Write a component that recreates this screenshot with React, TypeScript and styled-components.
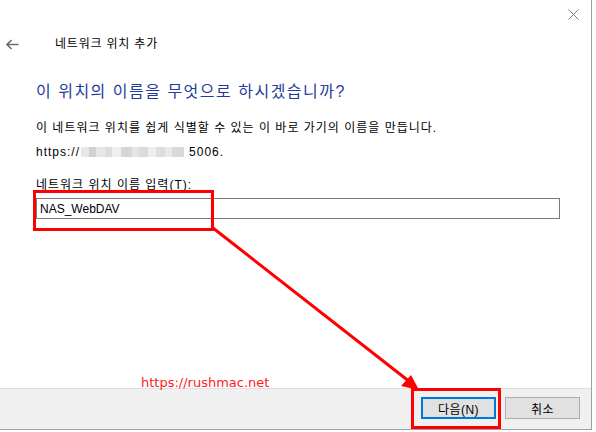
import React from "react";
import styled, { createGlobalStyle } from "styled-components";

const Global = createGlobalStyle`
  html, body { margin: 0; padding: 0; background: #ffffff; }
  body { font-family: "Liberation Sans", "Noto Sans CJK KR", sans-serif; }
`;

const Window = styled.div`
  position: relative;
  width: 591px;
  height: 429px;
  border-right: 1px solid #a0a0a0;
  border-bottom: 1px solid #a0a0a0;
  background: #ffffff;
  display: flex;
  flex-direction: column;
  font-family: "Liberation Sans", "Noto Sans CJK KR", sans-serif;
  font-size: 12px;
  color: #000;
  overflow: hidden;
`;

const TitleBar = styled.div`
  height: 30px;
  display: flex;
  justify-content: flex-end;
  align-items: center;
  padding-right: 10px;
`;

const CloseBtn = styled.div`
  width: 16px;
  height: 16px;
  display: flex;
  align-items: center;
  justify-content: center;
  margin-top: -2px;
`;

const Header = styled.div`
  height: 28px;
  display: flex;
  align-items: center;
  padding-left: 6px;
`;

const BackIcon = styled.div`
  width: 14px;
  height: 14px;
  display: flex;
  align-items: center;
  margin-right: 35px;
`;

const HeaderTitle = styled.div`
  font-size: 12px;
  line-height: 16px;
  letter-spacing: 0.8px;
  color: #000;
`;

const Body = styled.div`
  flex: 1;
  padding-left: 36px;
  padding-right: 32px;
  display: flex;
  flex-direction: column;
`;

const MainInstruction = styled.div`
  margin-top: 23px;
  font-size: 16px;
  line-height: 22px;
  letter-spacing: 1.5px;
  color: #1f3c9b;
`;

const Para = styled.div<{ $mt: number }>`
  margin-top: ${(p) => p.$mt}px;
  font-size: 12px;
  line-height: 16px;
  letter-spacing: 1px;
  display: flex;
  align-items: center;
`;

const Blur = styled.span`
  display: inline-flex;
  align-items: center;
  height: 12px;
  margin: 0 5px 0 1px;
`;

const Px = styled.span<{ $w: number; $c: string }>`
  display: inline-block;
  width: ${(p) => p.$w}px;
  height: 10px;
  background: ${(p) => p.$c};
`;

const Label = styled.div`
  margin-top: 17px;
  font-size: 12px;
  line-height: 16px;
  letter-spacing: 1px;
`;

const Input = styled.div`
  margin-top: 5px;
  width: 519px;
  height: 19px;
  border: 1px solid #7a7a7a;
  display: flex;
  align-items: center;
  padding-left: 3px;
  font-size: 12px;
  box-sizing: content-box;
`;

const Footer = styled.div`
  height: 41px;
  border-top: 1px solid #dfdfdf;
  background: #f0f0f0;
  display: flex;
  justify-content: flex-end;
  align-items: flex-start;
  padding: 8px 11px 0 0;
  box-sizing: border-box;
  gap: 9px;
`;

const Button = styled.div<{ $primary?: boolean }>`
  width: 75px;
  height: 22px;
  box-sizing: border-box;
  background: #e1e1e1;
  border: ${(p) => (p.$primary ? "2px solid #0078d7" : "1px solid #adadad")};
  display: flex;
  align-items: center;
  justify-content: center;
  font-size: 12px;
  letter-spacing: 0.5px;
  color: #000;
`;

const Watermark = styled.div`
  position: absolute;
  left: 141px;
  top: 375px;
  font-family: "DejaVu Sans", sans-serif;
  font-size: 13px;
  line-height: 15px;
  color: #ff1a1a;
`;

const Overlay = styled.svg`
  position: absolute;
  left: 0;
  top: 0;
  pointer-events: none;
`;

const blurBlocks: [number, string][] = [
  [8, "#e6e6e6"],
  [7, "#d2d2d2"],
  [9, "#e8e8e8"],
  [7, "#dcdcdc"],
  [9, "#f0f0f0"],
  [11, "#d6d6d6"],
  [7, "#e4e4e4"],
  [9, "#dadada"],
  [8, "#eeeeee"],
  [9, "#dedede"],
  [7, "#e9e9e9"],
  [12, "#d9d9d9"],
];

export default function App() {
  return (
    <>
      <Global />
      <Window>
        <TitleBar>
          <CloseBtn>
            <svg width="11" height="11" viewBox="0 0 11 11">
              <path d="M0.5 0.5 L10.5 10.5 M10.5 0.5 L0.5 10.5" stroke="#7a7a7a" strokeWidth="1" />
            </svg>
          </CloseBtn>
        </TitleBar>
        <Header>
          <BackIcon>
            <svg width="13" height="11" viewBox="0 0 13 11">
              <path d="M1 5.5 H12.5 M5.5 1 L1 5.5 L5.5 10" stroke="#6e6e6e" strokeWidth="1.6" fill="none" />
            </svg>
          </BackIcon>
          <HeaderTitle>네트워크 위치 추가</HeaderTitle>
        </Header>
        <Body>
          <MainInstruction>이 위치의 이름을 무엇으로 하시겠습니까?</MainInstruction>
          <Para $mt={17}>이 네트워크 위치를 쉽게 식별할 수 있는 이 바로 가기의 이름을 만듭니다.</Para>
          <Para $mt={8}>
            https://
            <Blur>
              {blurBlocks.map(([w, c], i) => (
                <Px key={i} $w={w} $c={c} />
              ))}
            </Blur>
            5006.
          </Para>
          <Label>네트워크 위치 이름 입력(T):</Label>
          <Input>NAS_WebDAV</Input>
        </Body>
        <Footer>
          <Button $primary>다음(N)</Button>
          <Button>취소</Button>
        </Footer>
        <Watermark>https://rushmac.net</Watermark>
        <Overlay width="591" height="429" viewBox="0 0 591 429">
          <rect x="34.5" y="191.5" width="178" height="38" fill="none" stroke="#ff0000" strokeWidth="3" />
          <rect x="412.5" y="389.5" width="87" height="38" fill="none" stroke="#ff0000" strokeWidth="3" />
          <line x1="213" y1="228" x2="410" y2="382" stroke="#ff0000" strokeWidth="3" />
          <polygon points="419,390 401,386 411,375" fill="#ff0000" />
        </Overlay>
      </Window>
    </>
  );
}
